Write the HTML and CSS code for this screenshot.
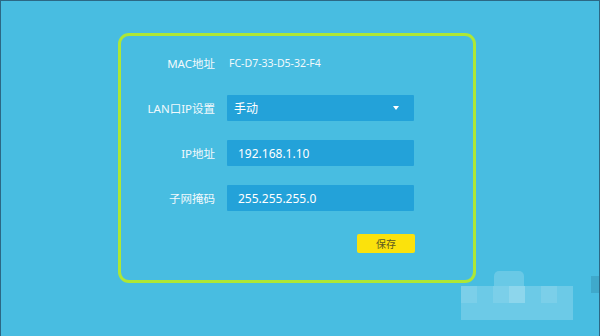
FILE: index.html
```html
<!doctype html>
<html lang="zh-CN">
  <head>
    <meta charset="utf-8">
    <title>LAN口设置</title>
    <link rel="stylesheet" href="styles.css">
  </head>
  <body>
    <div class="screen">
      <!-- 设置面板 -->
      <div class="panel">
        <div class="row">
          <span class="label">MAC地址</span>
          <span class="value">FC-D7-33-D5-32-F4</span>
        </div>
        <div class="row">
          <span class="label">LAN口IP设置</span>
          <div class="field select">
            <span>手动</span>
            <span class="arrow"></span>
          </div>
        </div>
        <div class="row">
          <span class="label">IP地址</span>
          <div class="field">192.168.1.10</div>
        </div>
        <div class="row">
          <span class="label">子网掩码</span>
          <div class="field">255.255.255.0</div>
        </div>
        <div class="actions">
          <button class="save">保存</button>
        </div>
      </div>

      <!-- 右下角马赛克 -->
      <div class="mosaic">
        <div class="mosaic-top"></div>
        <div class="mosaic-cells">
          <i class="a"></i><i class="b"></i><i class="a"></i><i class="c"></i><i class="b"></i><i class="a"></i><i class="b"></i>
          <i class="b"></i><i class="b"></i><i class="b"></i><i class="b"></i><i class="b"></i><i class="b"></i><i class="b"></i>
        </div>
      </div>
      <div class="edge-tab"></div>
    </div>
  </body>
</html>
```

FILE: styles.css
```css
body {
  margin: 0;
  font-family: "Noto Sans", "Noto Sans CJK SC", sans-serif;
}
.screen {
  position: relative;
  box-sizing: border-box;
  width: 600px;
  height: 336px;
  padding-top: 32px;
  border: 1px solid #2c6884;
  border-bottom: 0;
  background-color: #48bde1;
  overflow: hidden;
}
/* 绿色描边的面板 */
.panel {
  box-sizing: border-box;
  width: 358px;
  height: 250px;
  margin-left: 117px;
  padding-top: 14px;
  border: 3px solid #aee735;
  border-radius: 11px;
  display: flex;
  flex-direction: column;
  gap: 19px;
}
.row {
  display: grid;
  grid-template-columns: 94px 187px;
  column-gap: 12px;
  align-items: center;
  height: 26px;
}
.label {
  text-align: right;
  font-size: 11.5px;
  color: #f2f9fc;
}
.value {
  padding-left: 2px;
  font-size: 10.5px;
  color: #f2f9fc;
}
.field {
  box-sizing: border-box;
  height: 26px;
  padding-left: 11px;
  display: flex;
  align-items: center;
  background-color: #23a2d9;
  border-radius: 1px;
  font-size: 12px;
  color: #fff;
}
.select {
  justify-content: space-between;
  padding: 0 15px 0 7px;
}
.arrow {
  width: 0;
  height: 0;
  border: 3px solid transparent;
  border-width: 4px 3.5px 0;
  border-top-color: #fff;
}
.actions {
  display: flex;
  padding-left: 236px;
  margin-top: 4px;
}
.save {
  width: 58px;
  height: 19px;
  padding: 0;
  border: 0;
  border-radius: 2px;
  background-color: #fbe20c;
  font-family: inherit;
  font-size: 10px;
  color: #5d5a22;
}
/* 马赛克遮挡 */
.mosaic {
  position: absolute;
  left: 460px;
  top: 270px;
  width: 112px;
}
.mosaic-top {
  width: 30px;
  height: 15px;
  margin-left: 33px;
  border-radius: 5px 5px 0 0;
  background-color: rgba(255, 255, 255, 0.18);
}
.mosaic-cells {
  display: grid;
  grid-template-columns: repeat(7, 16px);
  grid-auto-rows: 17px;
}
.mosaic-cells i {
  display: block;
}
.mosaic-cells .a {
  background-color: rgba(255, 255, 255, 0.28);
}
.mosaic-cells .b {
  background-color: rgba(255, 255, 255, 0.2);
}
.mosaic-cells .c {
  background-color: rgba(255, 255, 255, 0.38);
}
.edge-tab {
  position: absolute;
  right: 0;
  top: 275px;
  width: 8px;
  height: 17px;
  background-color: #3fa9cb;
}
```
